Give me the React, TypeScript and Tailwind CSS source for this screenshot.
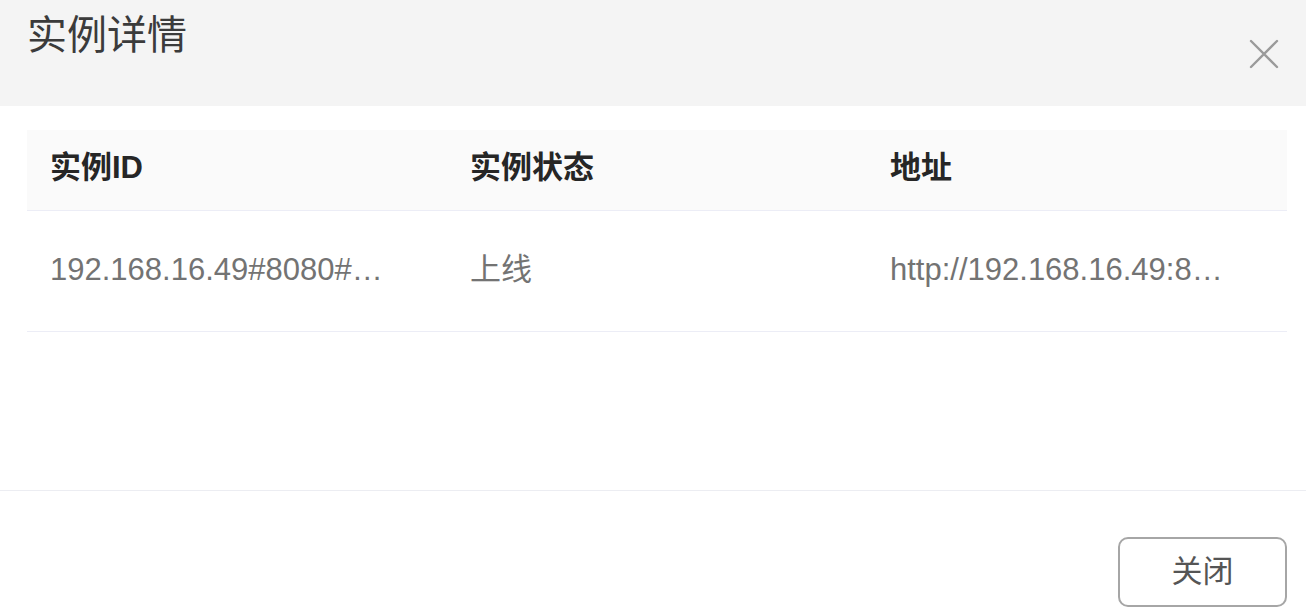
const FONT = "font-['Liberation_Sans','Noto_Sans_CJK_SC',sans-serif]";

const columns = ["实例ID", "实例状态", "地址"];

const rows = [
  {
    id: "192.168.16.49#8080#…",
    status: "上线",
    address: "http://192.168.16.49:8…",
  },
];

function CloseIcon() {
  return (
    <svg width="30" height="30" viewBox="0 0 30 30" fill="none" aria-hidden="true">
      <path d="M2 2 L28 28 M28 2 L2 28" stroke="#9a9a9a" strokeWidth="2.4" strokeLinecap="round" />
    </svg>
  );
}

export default function App() {
  return (
    <div className={`${FONT} w-[1306px] h-[615px] overflow-hidden bg-white`}>
      {/* header */}
      <div className="h-[106px] bg-[#f4f4f4] flex justify-between pl-[27px] pr-[27px]">
        <h2 className="text-[40px] leading-none pt-[15px] font-normal text-[#3b3b3b]">实例详情</h2>
        <button type="button" className="self-start mt-[39px]" aria-label="关闭">
          <CloseIcon />
        </button>
      </div>

      {/* body */}
      <div className="h-[385px] pt-[24px] pl-[27px] pr-[19px] border-b border-[#ecedf2]">
        <table className="w-full table-fixed border-collapse">
          <thead>
            <tr className="bg-[#fafafa] h-[80px] border-b border-[#ecedf6]">
              {columns.map((c) => (
                <th
                  key={c}
                  className="px-[23px] pb-[4px] text-left text-[31px] font-bold text-[#262626]"
                >
                  {c}
                </th>
              ))}
            </tr>
          </thead>
          <tbody>
            {rows.map((r) => (
              <tr key={r.id} className="h-[121px] border-b border-[#ecedf6]">
                <td className="px-[23px] text-[31px] text-[#737373] truncate">{r.id}</td>
                <td className="px-[23px] text-[31px] text-[#737373] truncate">{r.status}</td>
                <td className="px-[23px] text-[31px] text-[#737373] truncate">{r.address}</td>
              </tr>
            ))}
          </tbody>
        </table>
      </div>

      {/* footer */}
      <div className="flex justify-end pt-[46px] pr-[19px]">
        <button
          type="button"
          className="w-[169px] h-[70px] rounded-[10px] border-2 border-[#a6a6a6] text-[31px] text-[#555] bg-white"
        >
          关闭
        </button>
      </div>
    </div>
  );
}
